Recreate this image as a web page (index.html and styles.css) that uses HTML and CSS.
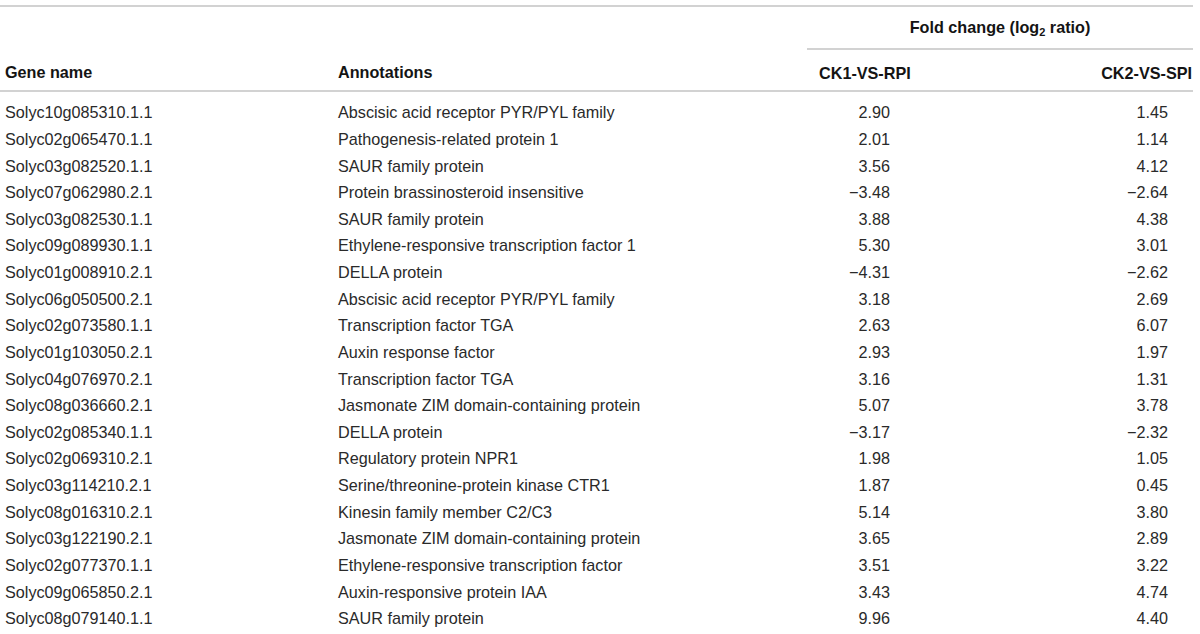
FILE: index.html
```html
<!DOCTYPE html>
<html lang="en">
<head>
<meta charset="utf-8">
<title>Fold change table</title>
<link rel="stylesheet" href="styles.css">
</head>
<body>
<table class="data">
  <colgroup>
    <col class="c-gene">
    <col class="c-annot">
    <col class="c-ck1">
    <col class="c-ck2">
  </colgroup>
  <thead>
    <tr class="head-top">
      <th class="h-gene" rowspan="2">Gene name</th>
      <th class="h-annot" rowspan="2">Annotations</th>
      <th class="h-fold" colspan="2">Fold change (log<sub>2</sub> ratio)</th>
    </tr>
    <tr class="head-sub">
      <th class="h-ck1">CK1-VS-RPI</th>
      <th class="h-ck2">CK2-VS-SPI</th>
    </tr>
  </thead>
  <tbody>
    <tr><td>Solyc10g085310.1.1</td><td>Abscisic acid receptor PYR/PYL family</td><td class="n1">2.90</td><td class="n2">1.45</td></tr>
    <tr><td>Solyc02g065470.1.1</td><td>Pathogenesis-related protein 1</td><td class="n1">2.01</td><td class="n2">1.14</td></tr>
    <tr><td>Solyc03g082520.1.1</td><td>SAUR family protein</td><td class="n1">3.56</td><td class="n2">4.12</td></tr>
    <tr><td>Solyc07g062980.2.1</td><td>Protein brassinosteroid insensitive</td><td class="n1">−3.48</td><td class="n2">−2.64</td></tr>
    <tr><td>Solyc03g082530.1.1</td><td>SAUR family protein</td><td class="n1">3.88</td><td class="n2">4.38</td></tr>
    <tr><td>Solyc09g089930.1.1</td><td>Ethylene-responsive transcription factor 1</td><td class="n1">5.30</td><td class="n2">3.01</td></tr>
    <tr><td>Solyc01g008910.2.1</td><td>DELLA protein</td><td class="n1">−4.31</td><td class="n2">−2.62</td></tr>
    <tr><td>Solyc06g050500.2.1</td><td>Abscisic acid receptor PYR/PYL family</td><td class="n1">3.18</td><td class="n2">2.69</td></tr>
    <tr><td>Solyc02g073580.1.1</td><td>Transcription factor TGA</td><td class="n1">2.63</td><td class="n2">6.07</td></tr>
    <tr><td>Solyc01g103050.2.1</td><td>Auxin response factor</td><td class="n1">2.93</td><td class="n2">1.97</td></tr>
    <tr><td>Solyc04g076970.2.1</td><td>Transcription factor TGA</td><td class="n1">3.16</td><td class="n2">1.31</td></tr>
    <tr><td>Solyc08g036660.2.1</td><td>Jasmonate ZIM domain-containing protein</td><td class="n1">5.07</td><td class="n2">3.78</td></tr>
    <tr><td>Solyc02g085340.1.1</td><td>DELLA protein</td><td class="n1">−3.17</td><td class="n2">−2.32</td></tr>
    <tr><td>Solyc02g069310.2.1</td><td>Regulatory protein NPR1</td><td class="n1">1.98</td><td class="n2">1.05</td></tr>
    <tr><td>Solyc03g114210.2.1</td><td>Serine/threonine-protein kinase CTR1</td><td class="n1">1.87</td><td class="n2">0.45</td></tr>
    <tr><td>Solyc08g016310.2.1</td><td>Kinesin family member C2/C3</td><td class="n1">5.14</td><td class="n2">3.80</td></tr>
    <tr><td>Solyc03g122190.2.1</td><td>Jasmonate ZIM domain-containing protein</td><td class="n1">3.65</td><td class="n2">2.89</td></tr>
    <tr><td>Solyc02g077370.1.1</td><td>Ethylene-responsive transcription factor</td><td class="n1">3.51</td><td class="n2">3.22</td></tr>
    <tr><td>Solyc09g065850.2.1</td><td>Auxin-responsive protein IAA</td><td class="n1">3.43</td><td class="n2">4.74</td></tr>
    <tr><td>Solyc08g079140.1.1</td><td>SAUR family protein</td><td class="n1">9.96</td><td class="n2">4.40</td></tr>
  </tbody>
</table>
</body>
</html>
```

FILE: styles.css
```css
html, body {
  margin: 0;
  padding: 0;
  background: #ffffff;
}

body {
  font-family: "Liberation Sans", Arial, Helvetica, sans-serif;
  font-size: 16.2px;
  color: #2a2a2a;
  overflow: hidden;
}

.data {
  margin-top: 5px;
  width: 1193px;
  border-collapse: collapse;
  table-layout: fixed;
  border-top: 2px solid #d2d2d2;
}

.c-gene { width: 338px; }
.c-annot { width: 469px; }
.c-ck1 { width: 193px; }
.c-ck2 { width: 193px; }

th {
  font-weight: bold;
  color: #141414;
  padding: 0;
  vertical-align: middle;
  line-height: 18px;
}

.head-top th {
  height: 40px;
}

.head-sub th {
  height: 35px;
  border-bottom: 2px solid #d2d2d2;
}

.h-gene,
.h-annot {
  text-align: left;
  vertical-align: bottom;
  padding-bottom: 9px;
  border-bottom: 2px solid #d2d2d2;
}

.h-gene { padding-left: 5px; }

.h-fold {
  text-align: center;
  border-bottom: 2px solid #d2d2d2;
  padding-bottom: 1px;
}

.h-fold sub {
  font-size: 11px;
  line-height: 0;
  vertical-align: -3px;
}

.h-ck1 {
  text-align: left;
  padding-left: 12px;
  padding-top: 5px;
}

.h-ck2 {
  text-align: right;
  padding-right: 1px;
  padding-top: 5px;
}

td {
  padding: 0;
  height: 26.63px;
  line-height: 18px;
  vertical-align: middle;
  white-space: nowrap;
}

tbody td:first-child { padding-left: 5px; }

tbody tr:first-child td {
  padding-top: 7px;
}

.n1 {
  text-align: right;
  padding-right: 110px;
}

.n2 {
  text-align: right;
  padding-right: 25px;
}
```
